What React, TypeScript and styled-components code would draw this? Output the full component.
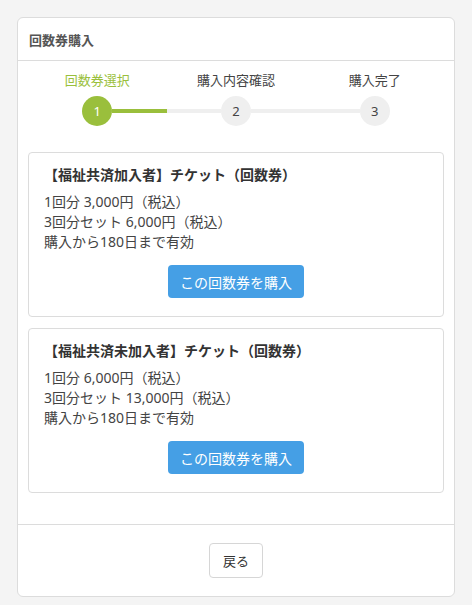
import React from "react";
import styled, { createGlobalStyle } from "styled-components";

const GlobalStyle = createGlobalStyle`
  html, body {
    margin: 0;
    padding: 0;
    background: #f4f4f4;
    font-family: "Noto Sans", "Noto Sans CJK JP", sans-serif;
    color: #444;
  }
  * {
    box-sizing: border-box;
  }
`;

type Step = { label: string; num: number };

const steps: Step[] = [
  { label: "回数券選択", num: 1 },
  { label: "購入内容確認", num: 2 },
  { label: "購入完了", num: 3 },
];

type Ticket = { title: string; lines: string[] };

const tickets: Ticket[] = [
  {
    title: "【福祉共済加入者】チケット（回数券）",
    lines: ["1回分 3,000円（税込）", "3回分セット 6,000円（税込）", "購入から180日まで有効"],
  },
  {
    title: "【福祉共済未加入者】チケット（回数券）",
    lines: ["1回分 6,000円（税込）", "3回分セット 13,000円（税込）", "購入から180日まで有効"],
  },
];

const current = 1;

const App = () => {
  return (
    <>
      <GlobalStyle />
      <Page>
        <Card>
          <Header>回数券購入</Header>
          <Body>
            <Stepper>
              {steps.map((s, i) => {
                const active = s.num <= current;
                return (
                  <StepCol key={s.num}>
                    <StepLabel $active={s.num === current}>{s.label}</StepLabel>
                    <Track>
                      <Segment
                        $hidden={i === 0}
                        $done={s.num <= current && i > 0}
                      />
                      <Circle $active={active}>{s.num}</Circle>
                      <Segment
                        $hidden={i === steps.length - 1}
                        $done={s.num <= current}
                      />
                    </Track>
                  </StepCol>
                );
              })}
            </Stepper>

            <TicketList>
              {tickets.map((t) => (
                <TicketBox key={t.title}>
                  <TicketTitle>{t.title}</TicketTitle>
                  <TicketInfo>
                    {t.lines.map((l) => (
                      <p key={l}>{l}</p>
                    ))}
                  </TicketInfo>
                  <BuyRow>
                    <BuyButton>この回数券を購入</BuyButton>
                  </BuyRow>
                </TicketBox>
              ))}
            </TicketList>
          </Body>
          <Footer>
            <BackButton>戻る</BackButton>
          </Footer>
        </Card>
      </Page>
    </>
  );
};

export default App;

const Page = styled.div`
  padding: 17px 17px 9px 17px;
`;

const Card = styled.div`
  background: #fff;
  border: 1px solid #dcdcdc;
  border-radius: 6px;
`;

const Header = styled.div`
  height: 43px;
  padding: 0 11px;
  display: flex;
  align-items: center;
  font-size: 13px;
  font-weight: bold;
  color: #555;
  border-bottom: 1px solid #dcdcdc;
`;

const Body = styled.div`
  padding: 10px 10px 31px 10px;
`;

const Stepper = styled.div`
  display: grid;
  grid-template-columns: repeat(3, 1fr);
`;

const StepCol = styled.div`
  display: flex;
  flex-direction: column;
  align-items: center;
`;

const StepLabel = styled.div<{ $active: boolean }>`
  font-size: 13px;
  line-height: 18px;
  color: ${(p) => (p.$active ? "#9abf3c" : "#444")};
`;

const Track = styled.div`
  margin-top: 7px;
  width: 100%;
  display: flex;
  align-items: center;
`;

const Segment = styled.div<{ $hidden: boolean; $done: boolean }>`
  flex: 1;
  height: 4px;
  background: ${(p) =>
    p.$hidden ? "transparent" : p.$done ? "#9abf3c" : "#efefef"};
`;

const Circle = styled.div<{ $active: boolean }>`
  width: 30px;
  height: 30px;
  border-radius: 50%;
  display: flex;
  align-items: center;
  justify-content: center;
  font-size: 13px;
  background: ${(p) => (p.$active ? "#9abf3c" : "#efefef")};
  color: ${(p) => (p.$active ? "#fff" : "#444")};
`;

const TicketList = styled.div`
  margin-top: 26px;
  display: flex;
  flex-direction: column;
  gap: 11px;
`;

const TicketBox = styled.div`
  border: 1px solid #dcdcdc;
  border-radius: 4px;
  padding: 12px 15px 18px 15px;
`;

const TicketTitle = styled.div`
  font-size: 14px;
  line-height: 20px;
  font-weight: bold;
  color: #333;
`;

const TicketInfo = styled.div`
  margin-top: 7px;

  p {
    margin: 0;
    font-size: 14px;
    line-height: 20px;
    color: #444;
  }
`;

const BuyRow = styled.div`
  margin-top: 13px;
  display: flex;
  justify-content: center;
`;

const BuyButton = styled.button`
  width: 136px;
  height: 33px;
  border: none;
  border-radius: 4px;
  background: #459fe5;
  color: #fff;
  font-family: "Noto Sans", "Noto Sans CJK JP", sans-serif;
  font-size: 14px;
  padding: 0;
`;

const Footer = styled.div`
  border-top: 1px solid #dcdcdc;
  padding: 18px 0 18px 0;
  display: flex;
  justify-content: center;
`;

const BackButton = styled.button`
  width: 54px;
  height: 35px;
  background: #fff;
  border: 1px solid #d6d6d6;
  border-radius: 4px;
  font-family: "Noto Sans", "Noto Sans CJK JP", sans-serif;
  font-size: 13px;
  color: #333;
  padding: 0;
`;
